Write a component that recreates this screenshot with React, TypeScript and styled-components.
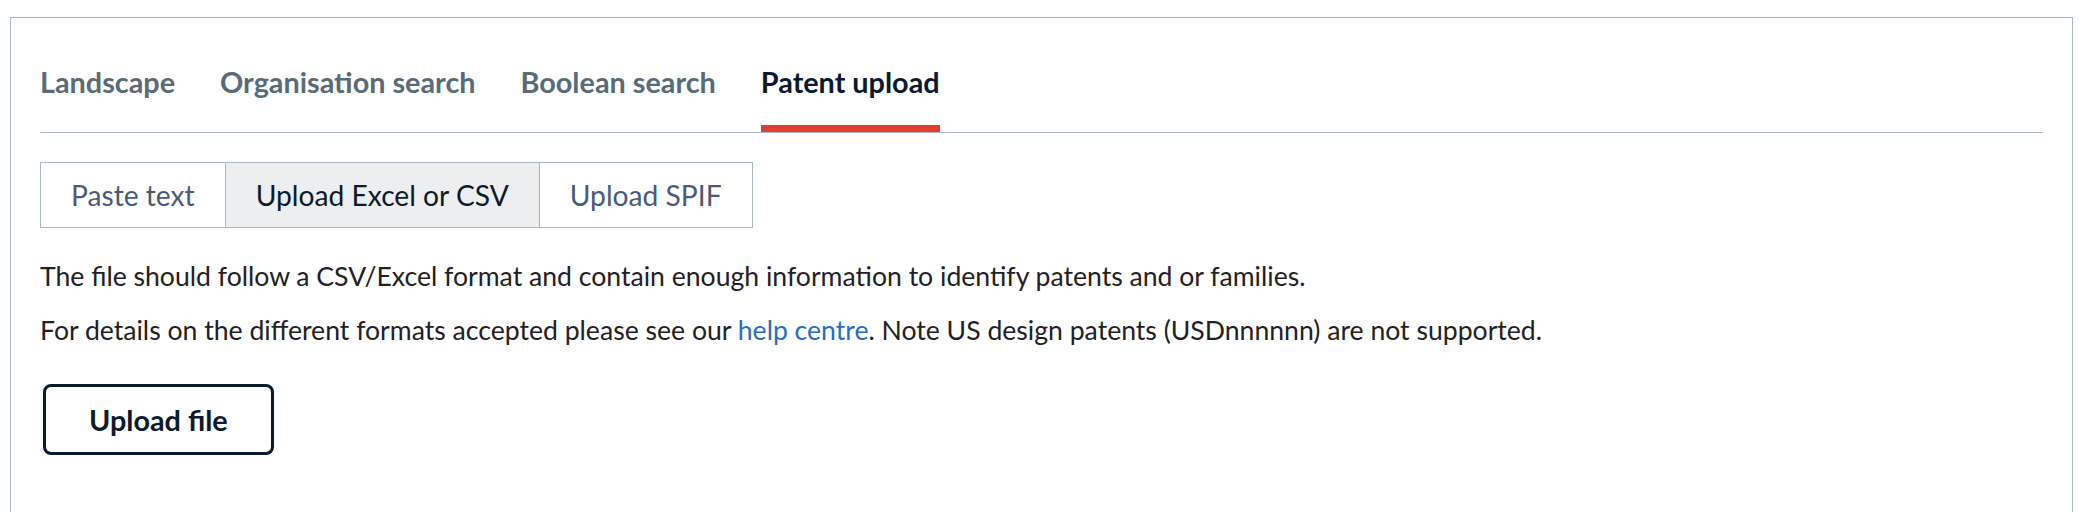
import React from "react";
import styled, { createGlobalStyle } from "styled-components";

const GlobalStyle = createGlobalStyle`
  html, body {
    margin: 0;
    padding: 0;
    background: #ffffff;
  }
  body {
    font-family: Lato, "Open Sans", "Liberation Sans", sans-serif;
    -webkit-font-smoothing: antialiased;
  }
`;

const Page = styled.div`
  padding: 17px 9px 0 10px;
`;

const Panel = styled.section`
  border: 1px solid #aab8c6;
  border-bottom: none;
  min-height: 560px;
  padding: 47px 29px 0 29px;
  box-sizing: border-box;
`;

const TabList = styled.nav`
  display: flex;
  gap: 45px;
  border-bottom: 1px solid #aab8c6;
`;

const Tab = styled.div<{ $active?: boolean }>`
  font-family: Lato, "Liberation Sans", sans-serif;
  font-weight: 700;
  font-size: 28.8px;
  line-height: 34px;
  color: ${(p) => (p.$active ? "#0b1a2e" : "#586b79")};
  padding-bottom: 26px;
  border-bottom: 7px solid ${(p) => (p.$active ? "#e1402f" : "transparent")};
  white-space: nowrap;
  cursor: pointer;
`;

const SegmentGroup = styled.div`
  display: inline-flex;
  margin-top: 29px;
  border: 1px solid #aab8c6;
`;

const Segment = styled.div<{ $active?: boolean }>`
  font-family: Lato, "Liberation Sans", sans-serif;
  font-weight: 400;
  font-size: 28.2px;
  line-height: 34px;
  padding: 15px 30px;
  color: ${(p) => (p.$active ? "#0c1a2b" : "#4a5a78")};
  background: ${(p) => (p.$active ? "#eceef0" : "#ffffff")};
  white-space: nowrap;
  cursor: pointer;

  & + & {
    border-left: 1px solid #aab8c6;
  }
`;

const Body = styled.div`
  display: flex;
  flex-direction: column;
  align-items: flex-start;
`;

const Paragraph = styled.p<{ $first?: boolean }>`
  font-family: Lato, "Liberation Sans", sans-serif;
  font-size: 26.6px;
  line-height: 40px;
  color: #1f2124;
  margin: ${(p) => (p.$first ? "28px" : "14px")} 0 0 0;
`;

const Link = styled.a`
  color: #2a6dbd;
  text-decoration: none;
`;

const UploadButton = styled.button`
  font-family: Lato, "Liberation Sans", sans-serif;
  font-weight: 700;
  font-size: 28.8px;
  line-height: 34px;
  color: #0b1a2e;
  background: #ffffff;
  border: 3px solid #0b1a2e;
  border-radius: 8px;
  padding: 16px 43px 15px;
  margin: 34px 0 0 3px;
  cursor: pointer;
`;

export default function App() {
  const tabs = ["Landscape", "Organisation search", "Boolean search", "Patent upload"];
  const segments = ["Paste text", "Upload Excel or CSV", "Upload SPIF"];
  return (
    <>
      <GlobalStyle />
      <Page>
        <Panel>
          <TabList>
            {tabs.map((t) => (
              <Tab key={t} $active={t === "Patent upload"}>
                {t}
              </Tab>
            ))}
          </TabList>
          <Body>
            <SegmentGroup>
              {segments.map((s) => (
                <Segment key={s} $active={s === "Upload Excel or CSV"}>
                  {s}
                </Segment>
              ))}
            </SegmentGroup>
            <Paragraph $first>
              The file should follow a CSV/Excel format and contain enough information to identify patents and or families.
            </Paragraph>
            <Paragraph>
              For details on the different formats accepted please see our <Link href="#">help centre</Link>. Note US design
              patents (USDnnnnnn) are not supported.
            </Paragraph>
            <UploadButton>Upload file</UploadButton>
          </Body>
        </Panel>
      </Page>
    </>
  );
}
